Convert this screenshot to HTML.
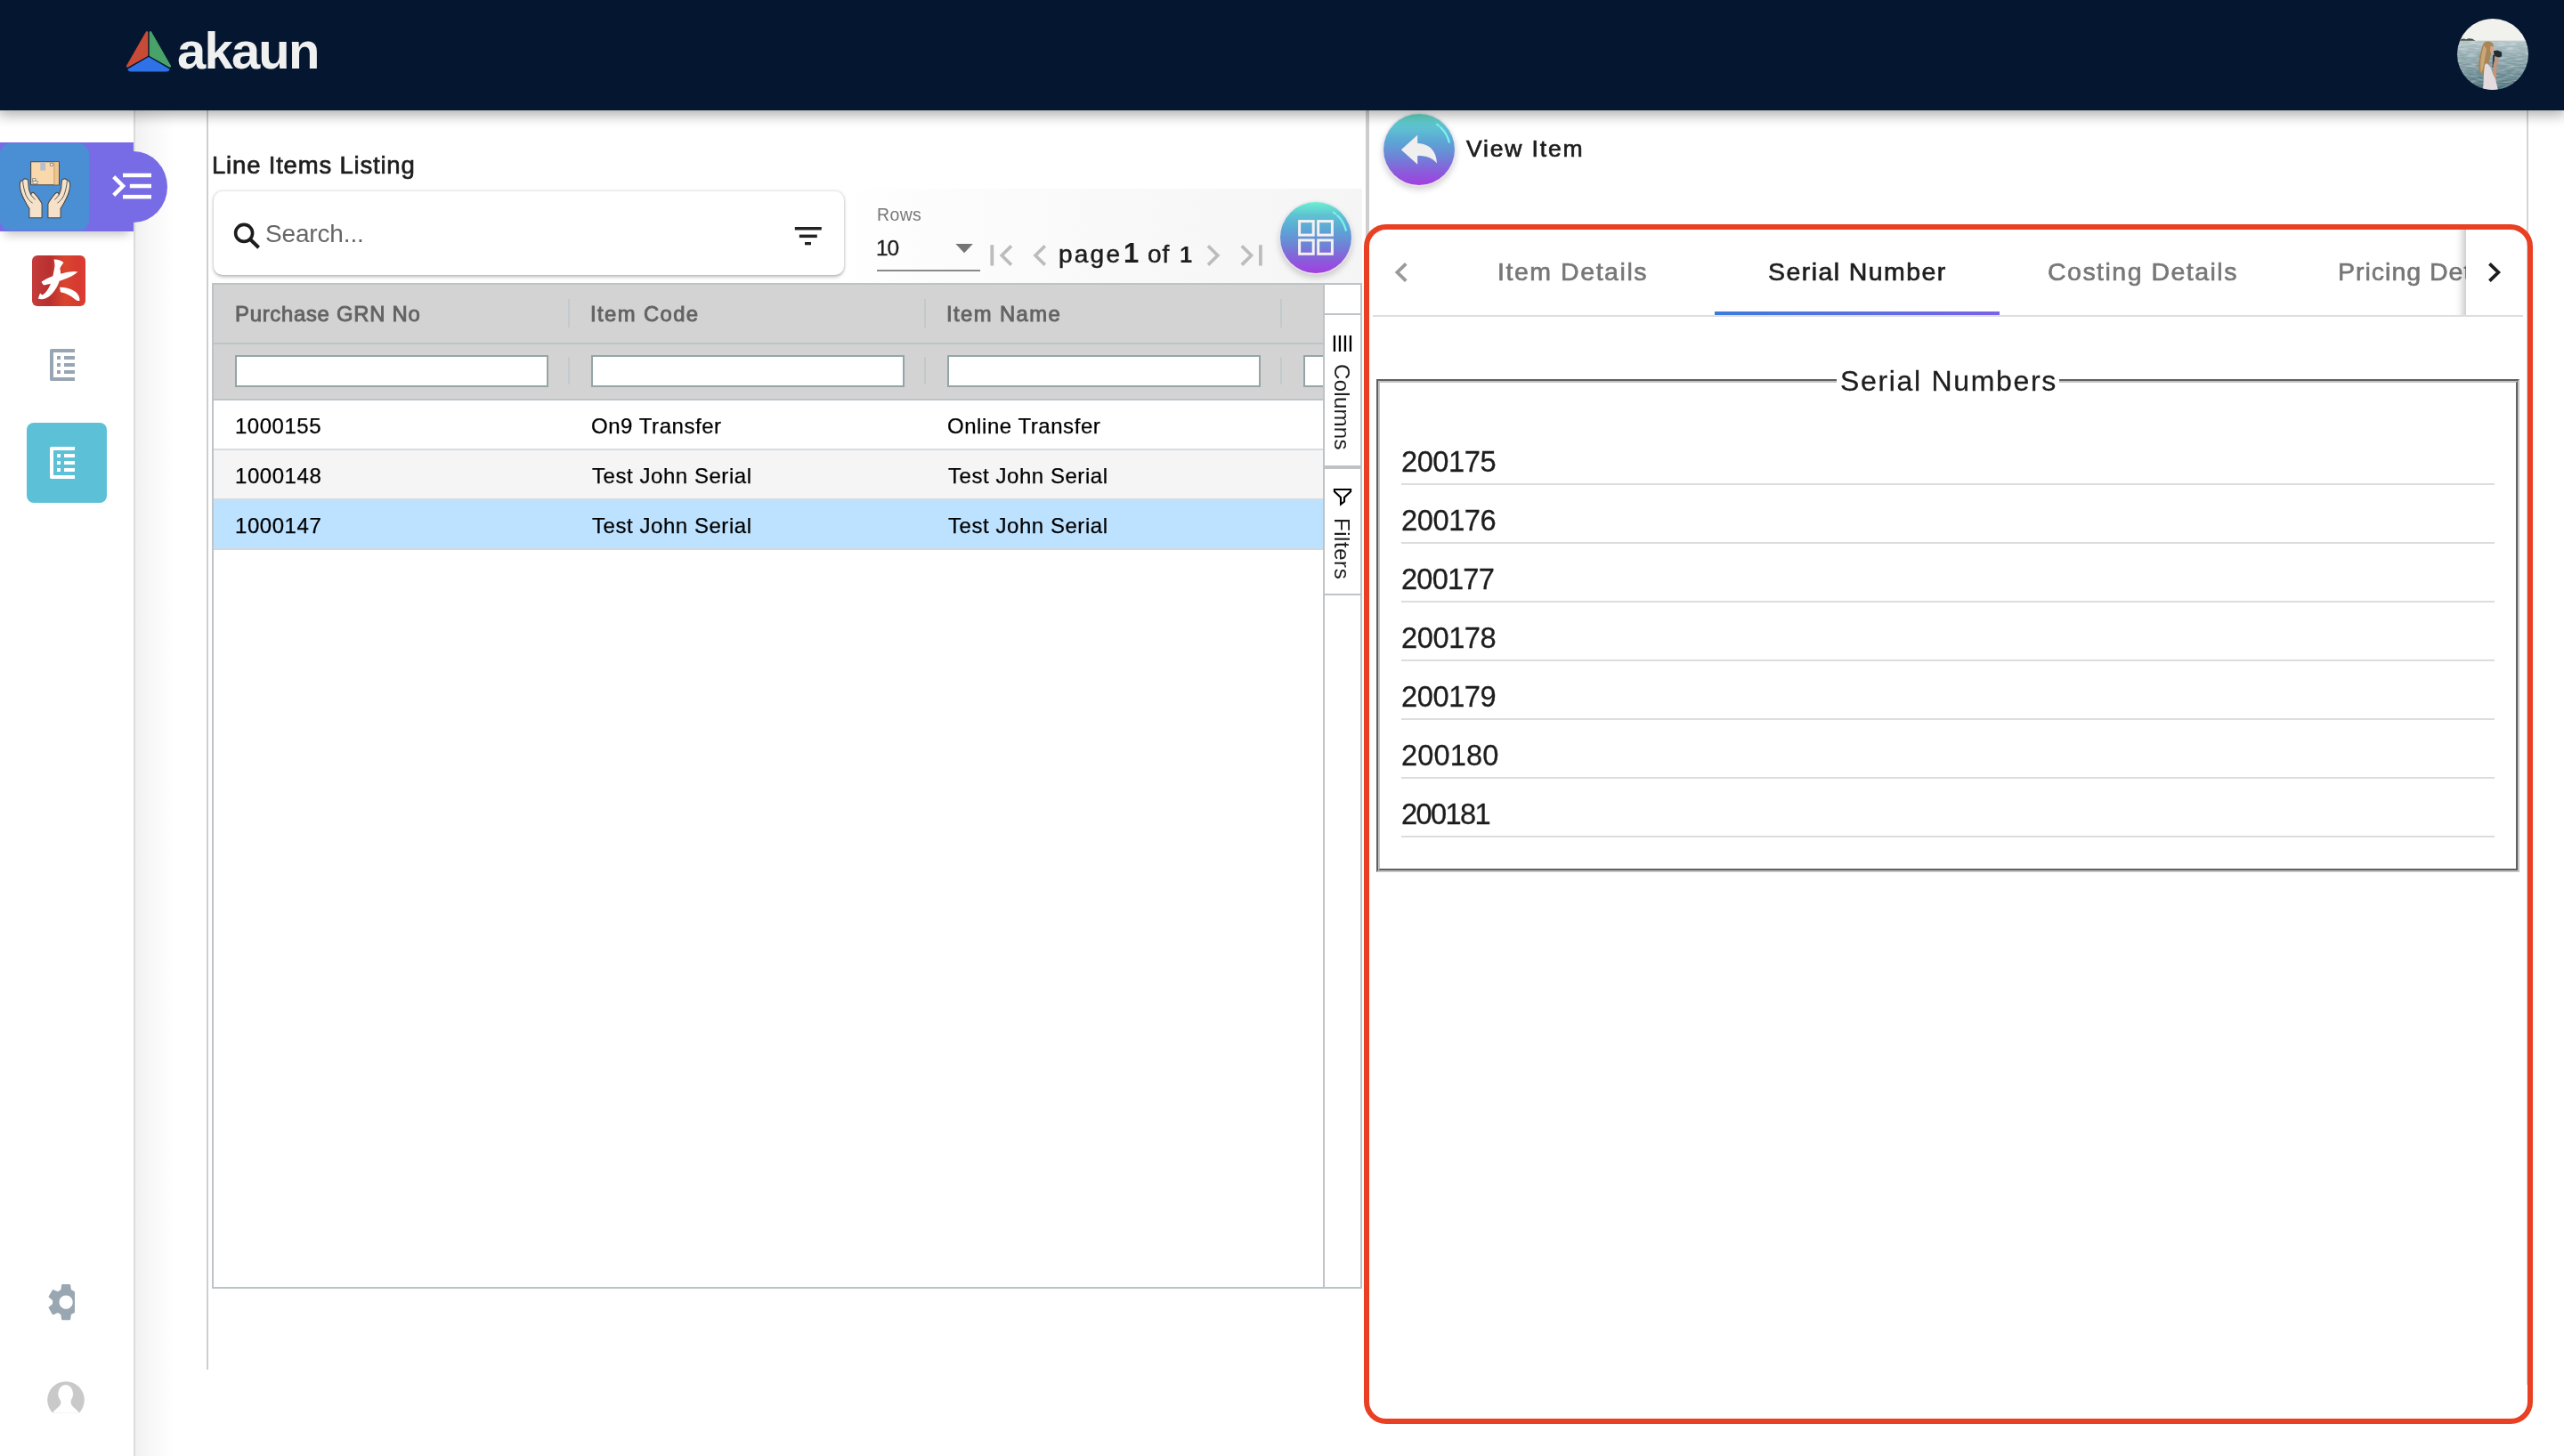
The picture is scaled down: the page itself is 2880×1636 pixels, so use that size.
<!DOCTYPE html>
<html lang="en">
<head>
<meta charset="utf-8">
<title>akaun - Line Items Listing</title>
<style>
html,body{margin:0;padding:0}
body{width:2880px;height:1636px;position:relative;overflow:hidden;background:#fff;font-family:"Liberation Sans",sans-serif}
@media (max-width:2200px){html{zoom:.5}}
.a{position:absolute}
.t{position:absolute;white-space:nowrap;will-change:transform}
svg{position:absolute;overflow:visible}
#hdr{left:0;top:0;width:2880px;height:124px;background:#051730;box-shadow:0 3px 14px 2px rgba(0,0,0,.33);z-index:10}
.row{left:240px;width:1246px;height:54px;border-bottom:2px solid #d9dcde}
.hsep{width:2px;background:#c3c9cc}
.finp{box-sizing:border-box;height:36px;width:352px;top:399px;background:#fff;border:2px solid #95a5a6}
.dv{left:1574px;width:1228px;height:2px;background:#dddddd}
</style>
</head>
<body>
<div class="a" style="left:152px;top:124px;width:44px;height:1512px;background:linear-gradient(to right,#f1f1f1,#f8f8f8 40%,#fff)"></div>
<div class="a" style="left:150px;top:124px;width:2px;height:1512px;background:#dbdbdb"></div>
<div class="a" style="left:232px;top:124px;width:2px;height:1415px;background:#cfcfcf"></div>
<!-- active app block -->
<div class="a" style="left:0;top:160px;width:150px;height:100px;background:#786be6;box-shadow:0 9px 10px -5px rgba(0,0,0,.22)"></div>
<div class="a" style="left:150px;top:170px;width:38px;height:80px;background:#786be6;border-radius:0 38px 38px 0/0 40px 40px 0"></div>
<div class="a" style="left:0;top:161px;width:100px;height:98px;background:#4a8fd3;border-radius:12px"></div>
<svg width="100" height="100" viewBox="0 160 100 100" style="left:0;top:160px">
  <g stroke="#4a4a4a" stroke-width="1.1" stroke-linejoin="round">
    <rect x="34.6" y="181.8" width="31.8" height="26" fill="#f9d9ac"/>
    <rect x="60.8" y="182.2" width="5.2" height="25.2" fill="#eec691" stroke="none"/><rect x="60.4" y="182.2" width="1" height="25.2" fill="#c9a070" stroke="none"/>
    <rect x="45.3" y="182" width="5.8" height="9.6" fill="#b9bec8" stroke="none"/>
    <rect x="56.4" y="183.4" width="3" height="3" fill="#fff" stroke-width=".6"/>
    <rect x="36.6" y="200.6" width="3.4" height="2.6" fill="#fff" stroke-width=".6"/>
    <rect x="36.9" y="203.6" width="5.2" height="2.8" fill="#fff" stroke-width=".6"/>
    <path id="hnd" d="M32.9 244.8 L32.9 234.3 C30.5 230.5 28.5 227 27.3 224.4 C25 220 23.5 216 23 213.3 C22.3 210 22.1 207.5 22.4 205.8 C22.8 203.5 24 202.6 25.5 202.8 C26.2 201.4 27.3 200.8 28.5 200.9 C30 201 31.3 201.8 31.6 202.8 C31.9 205.5 32 208 32.2 210.8 C32.8 214 33.7 216.5 34.7 218.8 C35 217.2 35.8 216.4 36.6 216.4 C37.6 216.2 38.4 216.8 39 217.6 C41.5 220 43.5 223 45.2 225.6 C46.2 227 46.8 228.2 47.1 229.3 L47.1 244.8 Z" fill="#f6e2cb"/>
    <path d="M25.6 203.4 C26 209 27.5 215 29.2 219.4 C31 223.5 33.8 226.5 36.6 228.1 M34.7 218.8 C36 221 38 223 39.7 224.4" fill="none" stroke-width=".9"/>
    <g transform="translate(101,0) scale(-1,1)">
    <path d="M32.9 244.8 L32.9 234.3 C30.5 230.5 28.5 227 27.3 224.4 C25 220 23.5 216 23 213.3 C22.3 210 22.1 207.5 22.4 205.8 C22.8 203.5 24 202.6 25.5 202.8 C26.2 201.4 27.3 200.8 28.5 200.9 C30 201 31.3 201.8 31.6 202.8 C31.9 205.5 32 208 32.2 210.8 C32.8 214 33.7 216.5 34.7 218.8 C35 217.2 35.8 216.4 36.6 216.4 C37.6 216.2 38.4 216.8 39 217.6 C41.5 220 43.5 223 45.2 225.6 C46.2 227 46.8 228.2 47.1 229.3 L47.1 244.8 Z" fill="#f6e2cb"/>
    <path d="M25.6 203.4 C26 209 27.5 215 29.2 219.4 C31 223.5 33.8 226.5 36.6 228.1 M34.7 218.8 C36 221 38 223 39.7 224.4" fill="none" stroke-width=".9"/>
    </g>
  </g>
</svg>
<svg width="60" height="40" viewBox="120 190 60 40" style="left:120px;top:190px">
  <rect x="138" y="194.7" width="32" height="4.5" fill="#fff"/>
  <rect x="145.8" y="206.8" width="24.2" height="4.5" fill="#fff"/>
  <rect x="138" y="218.9" width="32" height="4.5" fill="#fff"/>
  <path d="M127.7 198.6 L138.1 209 L127.7 219.4" fill="none" stroke="#fff" stroke-width="4.4"/>
</svg>
<!-- red app icon -->
<div class="a" style="left:36px;top:287px;width:60px;height:57px;border-radius:6px;background:linear-gradient(to right,#c43c3b 0%,#b8302f 32%,#da452f 62%,#d63a30 85%,#dd3b33 100%)"></div>
<svg width="60" height="57" viewBox="36 287 60 57" style="left:36px;top:287px">
  <g fill="#fff">
    <path d="M60.5 291.6 C64.5 291.2 69 292.8 71.4 295 C70 297.6 68.2 299.2 67.4 301.6 C68.6 306 68.2 311 66.6 316 C64.4 323.4 59.6 329.6 54.6 333.6 C51 336.2 46 336.8 42.8 335.4 L45 329.6 L47.4 331.6 C51.4 329.6 55 324 57.4 317.4 C59.4 311.4 60.4 304.6 61.4 299.4 C61.6 296.4 61 294 60.5 291.6 Z"/>
    <path d="M46.6 316.6 C53.6 312 63.6 308.4 71.8 306.8 C78 305.4 83.4 304.4 87.4 305.6 C83.6 309.2 77.4 312.2 70.4 314.4 C62.4 317 54.4 319.6 49.6 320.4 C48.2 319.8 47 318.4 46.6 316.6 Z"/>
    <path d="M67 322.8 C72 322.6 78.4 324 83 326.8 C87.6 329.6 90 334 89.4 338 C87 338 84.8 337 83.2 335.4 C79.2 332 73.8 329.2 68 328.2 Z"/>
  </g>
</svg>
<!-- list icon grey -->
<div class="a" style="left:50px;top:386px;width:34px;height:48px;overflow:hidden">
  <svg width="48" height="48" viewBox="0 0 24 24" style="left:0;top:0"><path fill="#98a6b3" d="M19 5v14H5V5h14m1.1-2H3.9c-.5 0-.9.4-.9.9v16.2c0 .4.4.9.9.9h16.2c.4 0 .9-.5.9-.9V3.9c0-.5-.5-.9-.9-.9zM11 7h6v2h-6V7zm0 4h6v2h-6v-2zm0 4h6v2h-6zM7 7h2v2H7zm0 4h2v2H7zm0 4h2v2H7z"/></svg>
</div>
<div class="a" style="left:30px;top:475px;width:90px;height:90px;border-radius:8px;background:#5cc1d7"></div>
<div class="a" style="left:50px;top:496px;width:34px;height:48px;overflow:hidden">
  <svg width="48" height="48" viewBox="0 0 24 24" style="left:0;top:0"><path fill="#fff" d="M19 5v14H5V5h14m1.1-2H3.9c-.5 0-.9.4-.9.9v16.2c0 .4.4.9.9.9h16.2c.4 0 .9-.5.9-.9V3.9c0-.5-.5-.9-.9-.9zM11 7h6v2h-6V7zm0 4h6v2h-6v-2zm0 4h6v2h-6zM7 7h2v2H7zm0 4h2v2H7zm0 4h2v2H7z"/></svg>
</div>
<!-- gear -->
<div class="a" style="left:49.4px;top:1437.7px;width:34.6px;height:51px;overflow:hidden">
  <svg width="50.3" height="50.3" viewBox="0 0 24 24" style="left:0;top:0"><path fill="#98a7b2" d="M19.14 12.94c.04-.3.06-.61.06-.94 0-.32-.02-.64-.07-.94l2.03-1.58c.18-.14.23-.41.12-.61l-1.92-3.32c-.12-.22-.37-.29-.59-.22l-2.39.96c-.5-.38-1.03-.7-1.62-.94l-.36-2.54c-.04-.24-.24-.41-.48-.41h-3.84c-.24 0-.43.17-.47.41l-.36 2.54c-.59.24-1.13.57-1.62.94l-2.39-.96c-.22-.08-.47 0-.59.22L2.74 8.87c-.12.21-.08.47.12.61l2.03 1.58c-.05.3-.09.63-.09.94s.02.64.07.94l-2.03 1.58c-.18.14-.23.41-.12.61l1.92 3.32c.12.22.37.29.59.22l2.39-.96c.5.38 1.03.7 1.62.94l.36 2.54c.05.24.24.41.48.41h3.84c.24 0 .44-.17.47-.41l.36-2.54c.59-.24 1.13-.56 1.62-.94l2.39.96c.22.08.47 0 .59-.22l1.92-3.32c.12-.22.07-.47-.12-.61l-2.01-1.58zM12 15.6c-1.98 0-3.6-1.62-3.6-3.6s1.62-3.6 3.6-3.6 3.6 1.62 3.6 3.6-1.62 3.6-3.6 3.6z"/></svg>
</div>
<!-- user -->
<svg width="44" height="44" viewBox="52 1550 44 44" style="left:52px;top:1550px">
  <defs><clipPath id="uc"><circle cx="74" cy="1573" r="20.8"/></clipPath><clipPath id="ur"><rect x="50" y="1550" width="48" height="37.2"/></clipPath></defs>
  <circle cx="74" cy="1573" r="20.8" fill="#c9c9c9" clip-path="url(#ur)"/>
  <g clip-path="url(#uc)" fill="#fff">
    <ellipse cx="73.7" cy="1566.3" rx="8.4" ry="10.2"/>
    <path d="M68.6 1573 L68 1578 C66.5 1581 62 1583.5 59.4 1587.2 L88.6 1587.2 C86 1583.5 81.5 1581 80 1578 L79.4 1573 Z"/>
  </g>
</svg>

<span class="t" style="left:237.7px;top:172.0px;font-size:27.5px;line-height:27.5px;font-weight:normal;color:#1d1d1d;letter-spacing:0.81px;-webkit-text-stroke:0.7px #1d1d1d;">Line Items Listing</span>
<!-- toolbar backdrop -->
<div class="a" style="left:950px;top:212px;width:580px;height:106px;background:linear-gradient(to right,#fff 0,#fdfdfd 60px,#f9f9f9 300px,#f5f5f5 100%)"></div>
<!-- search box -->
<div class="a" style="left:240px;top:214.5px;width:708px;height:94.5px;background:#fff;border-radius:10px;box-shadow:0 3px 4px -1px rgba(0,0,0,.24),0 0 3px 1px rgba(0,0,0,.13)"></div>
<svg width="34" height="34" viewBox="260 248 34 34" style="left:260px;top:248px">
  <circle cx="274.1" cy="261.9" r="9.5" fill="none" stroke="#1d1d1d" stroke-width="3.6"/>
  <path d="M281.4 269.3 L290.6 278.2" stroke="#1d1d1d" stroke-width="4" fill="none"/>
</svg>
<span class="t" style="left:298.4px;top:248.9px;font-size:28px;line-height:28px;font-weight:normal;color:#666;letter-spacing:-0.16px;">Search...</span>
<svg width="34" height="24" viewBox="890 253 34 24" style="left:890px;top:253px">
  <rect x="892.8" y="255" width="30" height="3.5" fill="#222"/>
  <rect x="897.8" y="263.6" width="20" height="3.5" fill="#222"/>
  <rect x="904" y="272" width="7" height="3.3" fill="#222"/>
</svg>
<span class="t" style="left:984.6px;top:232.2px;font-size:19.5px;line-height:19.5px;font-weight:normal;color:#777;letter-spacing:0.36px;">Rows</span>
<span class="t" style="left:984.0px;top:267.3px;font-size:24.5px;line-height:24.5px;font-weight:normal;color:#1d1d1d;letter-spacing:-1.03px;-webkit-text-stroke:0.3px #1d1d1d;">10</span>
<svg width="22" height="12" viewBox="1072 273 22 12" style="left:1072px;top:273px"><path d="M1073.4 274 L1092.8 274 L1083.1 284.2 Z" fill="#757575"/></svg>
<div class="a" style="left:985px;top:303px;width:116px;height:2px;background:#8a8a8a"></div>
<svg width="310" height="28" viewBox="1110 273 310 28" style="left:1110px;top:273px">
  <g fill="none" stroke="#bcbcbc" stroke-width="3.6">
    <path d="M1136 276.4 L1125.2 287 L1136 297.6"/>
    <path d="M1173.8 276.4 L1163 287 L1173.8 297.6"/>
    <path d="M1357 276.4 L1367.8 287 L1357 297.6"/>
    <path d="M1394.8 276.4 L1405.6 287 L1394.8 297.6"/>
  </g>
  <rect x="1112.4" y="275.2" width="3.8" height="23.4" fill="#bcbcbc"/>
  <rect x="1414" y="275.2" width="3.8" height="23.4" fill="#bcbcbc"/>
</svg>
<span class="t" style="left:1188.6px;top:271.6px;font-size:28px;line-height:28px;font-weight:normal;color:#1d1d1d;letter-spacing:2.23px;-webkit-text-stroke:0.5px #1d1d1d;">page</span><span class="t" style="left:1261.6px;top:269.3px;font-size:31px;line-height:31px;font-weight:bold;color:#1d1d1d;letter-spacing:0.00px;">1</span><span class="t" style="left:1289.3px;top:271.6px;font-size:28px;line-height:28px;font-weight:normal;color:#1d1d1d;letter-spacing:0.83px;-webkit-text-stroke:0.5px #1d1d1d;">of</span><span class="t" style="left:1325.4px;top:273.7px;font-size:25.5px;line-height:25.5px;font-weight:bold;color:#1d1d1d;letter-spacing:0.00px;">1</span>
<!-- round button -->
<div class="a" style="left:1438px;top:227px;width:80px;height:80px;border-radius:50%;background:linear-gradient(to bottom,#6bf0d1 0%,#5fc3d2 18%,#5ca6d5 38%,#6b88d6 58%,#8662da 78%,#a13fe0 100%);box-shadow:0 0 0 1.5px rgba(236,228,241,.9),0 4px 7px 1px rgba(0,0,0,.18)"></div>
<svg width="80" height="80" viewBox="1438 227 80 80" style="left:1438px;top:227px">
  <g fill="none" stroke="#f5f1f3" stroke-width="3">
    <rect x="1459.6" y="248.6" width="15.6" height="15.5"/><rect x="1480.7" y="248.6" width="15.7" height="15.5"/>
    <rect x="1459.6" y="269.9" width="15.6" height="15.4"/><rect x="1480.7" y="269.9" width="15.7" height="15.4"/>
  </g>
  <path d="M1497.9 238.6 A34.7 34.7 0 0 1 1511.8 258.8" fill="none" stroke="#7ff1ee" stroke-width="2.2" stroke-linecap="round" stroke-dasharray="3 2.5 40"/>
</svg>
<!-- grid -->
<div class="a" style="left:238px;top:318px;width:1288px;height:1126px;border:2px solid #bdc3c7;background:#fff"></div>
<div class="a" style="left:240px;top:320px;width:1246px;height:128px;background:#d3d3d3"></div>
<div class="a" style="left:240px;top:384.5px;width:1246px;height:2px;background:#bdc3c7"></div>
<div class="a" style="left:240px;top:448px;width:1246px;height:2px;background:#bdc3c7"></div>
<div class="a hsep" style="left:638px;top:336px;height:32px"></div><div class="a hsep" style="left:1038px;top:336px;height:32px"></div><div class="a hsep" style="left:1438px;top:336px;height:32px"></div>
<div class="a hsep" style="left:638px;top:401px;height:31px"></div><div class="a hsep" style="left:1038px;top:401px;height:31px"></div><div class="a hsep" style="left:1438px;top:401px;height:31px"></div>
<span class="t" style="left:264.1px;top:340.6px;font-size:23.8px;line-height:23.8px;font-weight:normal;color:#636363;letter-spacing:0.76px;-webkit-text-stroke:0.9px #636363;">Purchase GRN No</span><span class="t" style="left:663.1px;top:340.6px;font-size:23.8px;line-height:23.8px;font-weight:normal;color:#636363;letter-spacing:1.41px;-webkit-text-stroke:0.9px #636363;">Item Code</span><span class="t" style="left:1063.1px;top:340.6px;font-size:23.8px;line-height:23.8px;font-weight:normal;color:#636363;letter-spacing:1.41px;-webkit-text-stroke:0.9px #636363;">Item Name</span>
<div class="a finp" style="left:264px"></div><div class="a finp" style="left:664px"></div><div class="a finp" style="left:1064px"></div>
<div class="a finp" style="left:1464px;width:24px;border-right:none"></div>
<div class="a row" style="top:450px;background:#fff"></div>
<div class="a row" style="top:506px;background:#f5f5f5"></div>
<div class="a row" style="top:562px;background:#bde2ff;border-bottom-color:#d0d9df"></div>
<span class="t" style="left:263.6px;top:466.7px;font-size:24px;line-height:24px;font-weight:normal;color:#000;letter-spacing:0.52px;-webkit-text-stroke:0.25px #000;">1000155</span><span class="t" style="left:663.6px;top:466.7px;font-size:24px;line-height:24px;font-weight:normal;color:#000;letter-spacing:0.55px;-webkit-text-stroke:0.25px #000;">On9 Transfer</span><span class="t" style="left:1063.6px;top:466.7px;font-size:24px;line-height:24px;font-weight:normal;color:#000;letter-spacing:0.55px;-webkit-text-stroke:0.25px #000;">Online Transfer</span><span class="t" style="left:263.6px;top:522.7px;font-size:24px;line-height:24px;font-weight:normal;color:#000;letter-spacing:0.55px;-webkit-text-stroke:0.25px #000;">1000148</span><span class="t" style="left:664.6px;top:522.7px;font-size:24px;line-height:24px;font-weight:normal;color:#000;letter-spacing:0.55px;-webkit-text-stroke:0.25px #000;">Test John Serial</span><span class="t" style="left:1064.6px;top:522.7px;font-size:24px;line-height:24px;font-weight:normal;color:#000;letter-spacing:0.55px;-webkit-text-stroke:0.25px #000;">Test John Serial</span><span class="t" style="left:263.6px;top:578.7px;font-size:24px;line-height:24px;font-weight:normal;color:#000;letter-spacing:0.55px;-webkit-text-stroke:0.25px #000;">1000147</span><span class="t" style="left:664.6px;top:578.7px;font-size:24px;line-height:24px;font-weight:normal;color:#000;letter-spacing:0.55px;-webkit-text-stroke:0.25px #000;">Test John Serial</span><span class="t" style="left:1064.6px;top:578.7px;font-size:24px;line-height:24px;font-weight:normal;color:#000;letter-spacing:0.55px;-webkit-text-stroke:0.25px #000;">Test John Serial</span>
<!-- grid side bar -->
<div class="a" style="left:1486px;top:320px;width:40px;height:1126px;background:#fff;border-left:2px solid #bdc3c7"></div>
<div class="a" style="left:1488px;top:352px;width:40px;height:2px;background:#bdc3c7"></div>
<div class="a" style="left:1488px;top:523px;width:40px;height:4px;background:#bdc3c7"></div>
<div class="a" style="left:1488px;top:667px;width:40px;height:2px;background:#bdc3c7"></div>
<svg width="24" height="20" viewBox="1496 376 24 20" style="left:1496px;top:376px">
  <g fill="#000"><rect x="1497.8" y="376.9" width="2.3" height="18.1"/><rect x="1503.8" y="376.9" width="2.3" height="18.1"/><rect x="1509.8" y="376.9" width="2.3" height="18.1"/><rect x="1515.8" y="376.9" width="2.3" height="18.1"/></g>
</svg>
<span class="t" style="left:1495px;top:409px;writing-mode:vertical-lr;font-size:24px;line-height:24px;color:#1d1d1d;letter-spacing:.3px">Columns</span>
<svg width="24" height="22" viewBox="1496 547 24 22" style="left:1496px;top:547px">
  <path d="M1498.9 550 L1517.1 550 L1517.1 552.3 L1510 558.9 L1510 563.5 L1506 566.6 L1506 558.9 L1498.9 552.3 Z" fill="none" stroke="#000" stroke-width="2.1" stroke-linejoin="miter"/>
</svg>
<span class="t" style="left:1495px;top:582px;writing-mode:vertical-lr;font-size:24px;line-height:24px;color:#1d1d1d;letter-spacing:.55px">Filters</span>

<div class="a" style="left:1534px;top:124px;width:4px;height:1416px;background:#cdcdcd"></div>
<div class="a" style="left:2838px;top:124px;width:2px;height:1432px;background:#d4d4d4"></div>
<!-- back button -->
<div class="a" style="left:1554px;top:128px;width:80px;height:80px;border-radius:50%;background:linear-gradient(to bottom,#62d8c4 0%,#5fc3d2 18%,#5ca6d5 38%,#6b88d6 58%,#8662da 78%,#a13fe0 100%);box-shadow:0 0 0 1.5px rgba(236,228,241,.9),0 4px 7px 1px rgba(0,0,0,.18)"></div>
<svg width="80" height="80" viewBox="1554 128 80 80" style="left:1554px;top:128px">
  <path d="M1573.8 168.2 L1592.2 151.7 L1592.2 161 C1605.5 161.6 1613.4 169.2 1614 183.6 C1609.4 177.4 1602.6 175 1592.2 175 L1592.2 184.7 Z" fill="#efefef"/>
  <path d="M1613.9 139.6 A34.7 34.7 0 0 1 1627.8 159.8" fill="none" stroke="#7ff1ee" stroke-width="2.2" stroke-linecap="round" stroke-dasharray="3 2.5 40"/>
</svg>
<span class="t" style="left:1646.9px;top:153.5px;font-size:26.5px;line-height:26.5px;font-weight:normal;color:#1d1d1d;letter-spacing:1.84px;-webkit-text-stroke:0.7px #1d1d1d;">View Item</span>
<!-- tabs -->
<div class="a" style="left:1542px;top:354px;width:1292px;height:2px;background:#dedede"></div>
<svg width="20" height="26" viewBox="1564 293 20 26" style="left:1564px;top:293px"><path d="M1579.3 296.4 L1569.4 306 L1579.3 315.6" fill="none" stroke="#9a9a9a" stroke-width="3.8"/></svg>
<span class="t" style="left:1681.7px;top:291.1px;font-size:28.5px;line-height:28.5px;font-weight:normal;color:#777;letter-spacing:1.55px;-webkit-text-stroke:0.65px #777;">Item Details</span><span class="t" style="left:1986.0px;top:291.1px;font-size:28.5px;line-height:28.5px;font-weight:normal;color:#1d1d1d;letter-spacing:1.43px;-webkit-text-stroke:0.65px #1d1d1d;">Serial Number</span><span class="t" style="left:2299.8px;top:291.1px;font-size:28.5px;line-height:28.5px;font-weight:normal;color:#777;letter-spacing:1.48px;-webkit-text-stroke:0.65px #777;">Costing Details</span>
<div class="a" style="left:1926px;top:350px;width:320px;height:4px;background:linear-gradient(to right,#3a7cdc,#7a63e8)"></div>
<div class="a" style="left:2566px;top:262px;width:204px;height:92px;overflow:hidden"><span class="t" style="left:60.3px;top:29.1px;font-size:28.5px;line-height:28.5px;font-weight:normal;color:#777;letter-spacing:1.00px;-webkit-text-stroke:0.65px #777;">Pricing Details</span></div>
<div class="a" style="left:2756px;top:258px;width:80px;height:96px;overflow:hidden"><div class="a" style="left:14px;top:-10px;width:80px;height:116px;background:#fff;box-shadow:-3px 0 9px rgba(0,0,0,.26)"></div></div>
<svg width="20" height="26" viewBox="2792 294 20 26" style="left:2792px;top:292.8px"><path d="M2796.4 297.4 L2806.3 307 L2796.4 316.6" fill="none" stroke="#1d1d1d" stroke-width="3.8"/></svg>
<!-- fieldset -->
<div class="a" style="left:1546px;top:426px;width:1280px;height:550px;border:2px solid;border-color:#5f5f5f #c4c4c4 #c4c4c4 #5f5f5f"></div>
<div class="a" style="left:1548px;top:428px;width:1276px;height:546px;border:2px solid;border-color:#c4c4c4 #5f5f5f #5f5f5f #c4c4c4"></div>
<div class="a" style="left:2063px;top:424px;width:250px;height:6px;background:#fff"></div>
<span class="t" style="left:2066.9px;top:411.9px;font-size:32px;line-height:32px;font-weight:normal;color:#1d1d1d;letter-spacing:1.67px;-webkit-text-stroke:0.3px #1d1d1d;">Serial Numbers</span>
<span class="t" style="left:1573.6px;top:502.9px;font-size:32.6px;line-height:32.6px;font-weight:normal;color:#1d1d1d;letter-spacing:-0.44px;-webkit-text-stroke:0.3px #1d1d1d;">200175</span><span class="t" style="left:1573.6px;top:568.9px;font-size:32.6px;line-height:32.6px;font-weight:normal;color:#1d1d1d;letter-spacing:-0.40px;-webkit-text-stroke:0.3px #1d1d1d;">200176</span><span class="t" style="left:1573.6px;top:634.9px;font-size:32.6px;line-height:32.6px;font-weight:normal;color:#1d1d1d;letter-spacing:-0.78px;-webkit-text-stroke:0.3px #1d1d1d;">200177</span><span class="t" style="left:1573.6px;top:700.9px;font-size:32.6px;line-height:32.6px;font-weight:normal;color:#1d1d1d;letter-spacing:-0.40px;-webkit-text-stroke:0.3px #1d1d1d;">200178</span><span class="t" style="left:1573.6px;top:766.9px;font-size:32.6px;line-height:32.6px;font-weight:normal;color:#1d1d1d;letter-spacing:-0.40px;-webkit-text-stroke:0.3px #1d1d1d;">200179</span><span class="t" style="left:1573.6px;top:832.9px;font-size:32.6px;line-height:32.6px;font-weight:normal;color:#1d1d1d;letter-spacing:0.12px;-webkit-text-stroke:0.3px #1d1d1d;">200180</span><span class="t" style="left:1573.6px;top:898.9px;font-size:32.6px;line-height:32.6px;font-weight:normal;color:#1d1d1d;letter-spacing:-1.60px;-webkit-text-stroke:0.3px #1d1d1d;">200181</span>
<div class="a dv" style="top:543px"></div><div class="a dv" style="top:609px"></div><div class="a dv" style="top:675px"></div><div class="a dv" style="top:741px"></div><div class="a dv" style="top:807px"></div><div class="a dv" style="top:873px"></div><div class="a dv" style="top:939px"></div>
<!-- red highlight -->
<div class="a" style="left:1532px;top:252px;width:1301px;height:1336px;border:6px solid #e93f22;border-radius:25px;z-index:5"></div>

<div id="hdr" class="a">
  <svg width="60" height="54" viewBox="138 30 60 54" style="left:138px;top:30px">
    <path d="M165 36.4 L165 62 L143.2 74.3 Z" fill="#c94a36" stroke="#c94a36" stroke-width="2.6" stroke-linejoin="round"/>
    <path d="M169 36.4 L169 62 L190.8 74.3 Z" fill="#48a269" stroke="#48a269" stroke-width="2.6" stroke-linejoin="round"/>
    <path d="M167 65.4 L144.7 78.2 Q145.2 79.3 147.2 79.3 L186.8 79.3 Q188.8 79.3 189.3 78.2 Z" fill="#2f72e8" stroke="#2f72e8" stroke-width="2.4" stroke-linejoin="round"/>
  </svg>
  <span class="t" style="left:198.5px;top:27.9px;font-size:58px;line-height:58px;font-weight:bold;color:#f0f0f0;letter-spacing:-1.80px;">akaun</span>
  <svg width="80" height="80" viewBox="0 0 80 80" style="left:2760px;top:21px">
    <defs>
      <filter id="wv" x="0" y="0" width="1" height="1"><feTurbulence type="fractalNoise" baseFrequency="0.09 0.55" numOctaves="2" seed="4" result="n"/><feColorMatrix in="n" type="matrix" values="0 0 0 0 1  0 0 0 0 1  0 0 0 0 1  1.6 0 0 0 -0.62"/></filter><clipPath id="avc"><circle cx="40" cy="40" r="40"/></clipPath>
      <linearGradient id="sea" x1="0" y1="0" x2="0" y2="1"><stop offset="0" stop-color="#b3c4c7"/><stop offset=".35" stop-color="#8ba5ab"/><stop offset="1" stop-color="#4c6f78"/></linearGradient>
    </defs>
    <g clip-path="url(#avc)">
      <rect x="0" y="0" width="80" height="25" fill="#f1f1ee"/>
      <rect x="0" y="24.7" width="80" height="56" fill="url(#sea)"/>
      <rect x="0" y="25.5" width="80" height="55" filter="url(#wv)" opacity=".55"/>
      <path d="M2 24.7 Q6 21.5 10 23.2 Q15 20.8 20.5 24.7 Z" fill="#3f4d45"/>
      <path d="M33 25.6 C38 24.8 41 27.5 41 31 L38 40 L35 52 C33 58 30 62 27 62 C22 58 24 44 27 36 C28 30 30 26 33 25.6 Z" fill="#a98558"/>
      <path d="M30 30 C27 40 25 52 27 61 C30 56 31 44 33 34 Z" fill="#c8a878"/>
      <path d="M37.5 30.5 L41.3 31.5 L41.6 38 L38.5 40 L37 36 Z" fill="#d2a68c"/>
      <path d="M41 36.2 Q45 34.5 47.5 36.5 L50 37.5 L50.2 42.5 L46 43.6 L41.5 42 Z" fill="#222b31"/>
      <path d="M40 41 L42 41 L42 55 L39.5 55 Z" fill="#3a3f44"/>
      <path d="M43 43 Q46.5 42 46.5 46 L44.5 52 L43.5 70 L40 70 L40.5 52 Z" fill="#c69578"/>
      <path d="M33 50 C36 52 39 56 40 62 L43 68 L46 80 L29 80 C30 70 29.5 60 31 52 Z" fill="#e4dbde"/>
    </g>
  </svg>
</div>

</body>
</html>
